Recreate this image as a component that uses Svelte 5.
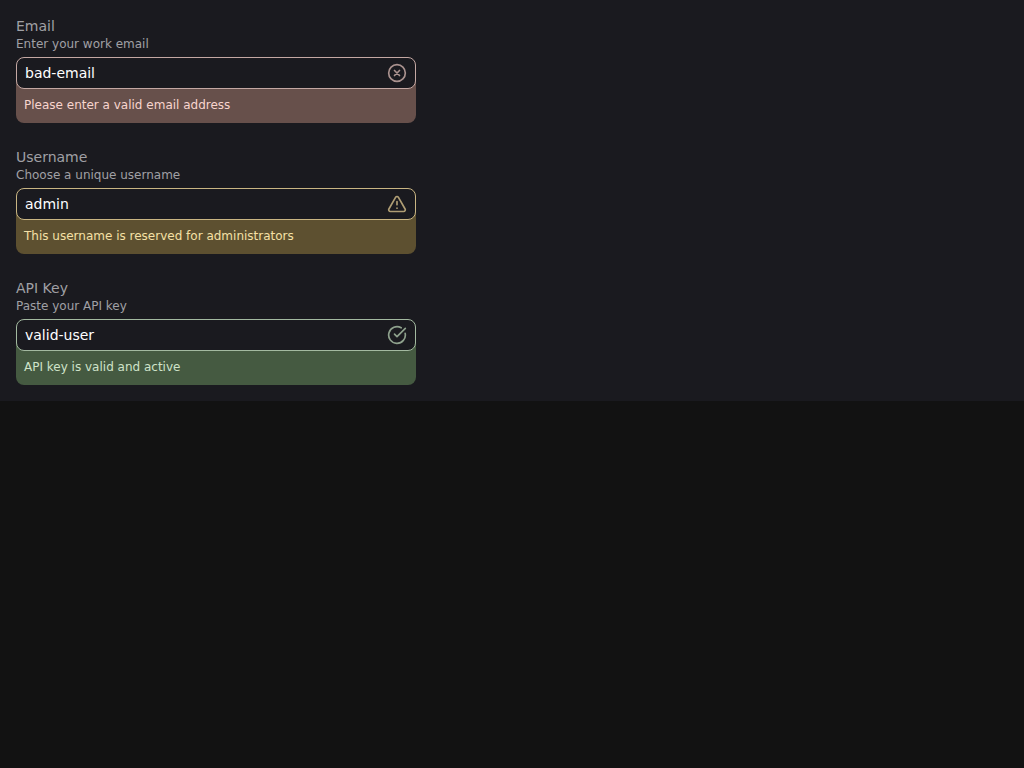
<script>
	let fields = [
		{
			label: 'Email',
			hint: 'Enter your work email',
			value: 'bad-email',
			status: 'error',
			message: 'Please enter a valid email address'
		},
		{
			label: 'Username',
			hint: 'Choose a unique username',
			value: 'admin',
			status: 'warning',
			message: 'This username is reserved for administrators'
		},
		{
			label: 'API Key',
			hint: 'Paste your API key',
			value: 'valid-user',
			status: 'success',
			message: 'API key is valid and active'
		}
	];
</script>

<div class="panel">
	{#each fields as field}
		<div class="field {field.status}">
			<label for={field.label}>{field.label}</label>
			<p class="hint">{field.hint}</p>
			<div class="control">
				<input id={field.label} value={field.value} />
				<svg class="icon" viewBox="0 0 24 24" width="20" height="20" fill="none" stroke="currentColor" stroke-width="2" stroke-linecap="round" stroke-linejoin="round">
					{#if field.status === 'error'}
						<circle cx="12" cy="12" r="10" />
						<path d="M15 9l-6 6M9 9l6 6" />
					{:else if field.status === 'warning'}
						<path d="M21.73 18l-8-14a2 2 0 0 0-3.46 0l-8 14A2 2 0 0 0 4 21h16a2 2 0 0 0 1.73-3z" />
						<path d="M12 9v4M12 17h.01" />
					{:else}
						<path d="M21.8 10A10 10 0 1 1 17 3.34" />
						<path d="M9 11l3 3L22 4" />
					{/if}
				</svg>
			</div>
			<div class="message">{field.message}</div>
		</div>
	{/each}
</div>

<style>
	:global(body) {
		margin: 0;
		background: #121212;
		font-family: 'DejaVu Sans', sans-serif;
	}

	.panel {
		display: flex;
		flex-direction: column;
		gap: 24px;
		padding: 16px;
		background: #1a1a1f;
	}

	.field {
		width: 400px;
	}

	.field.error {
		--line: #c4a8a3;
		--tint: #67504b;
		--text: #f8d5ce;
	}

	.field.warning {
		--line: #c9b583;
		--tint: #5d5030;
		--text: #f5e0a6;
	}

	.field.success {
		--line: #a3b9a0;
		--tint: #455a41;
		--text: #cfe3c9;
	}

	label {
		display: block;
		font-size: 14px;
		line-height: 20px;
		color: #a0a0a5;
	}

	.hint {
		margin: 0 0 5px;
		font-size: 12px;
		line-height: 16px;
		color: #a0a0a5;
	}

	.control {
		position: relative;
		z-index: 1;
	}

	input {
		display: block;
		width: 100%;
		height: 32px;
		box-sizing: border-box;
		padding: 0 40px 0 8px;
		border: 1px solid var(--line);
		border-radius: 8px;
		background: #1a1a1f;
		color: #fff;
		font-family: inherit;
		font-size: 14px;
		outline: none;
	}

	.icon {
		position: absolute;
		top: 6px;
		right: 9px;
		color: var(--line);
		opacity: 0.85;
	}

	.message {
		margin-top: -8px;
		padding: 15px 8px 9px;
		border-radius: 0 0 8px 8px;
		background: var(--tint);
		color: var(--text);
		font-size: 12px;
		line-height: 18px;
	}
</style>
